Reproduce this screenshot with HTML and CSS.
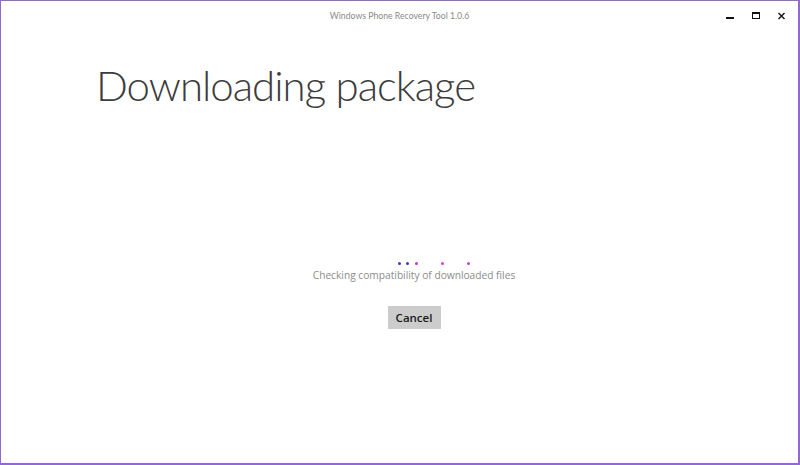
FILE: index.html
```html
<!DOCTYPE html>
<html>
<head>
<meta charset="utf-8">
<link rel="stylesheet" href="styles.css">
</head>
<body>
<div class="window">
  <div class="titlebar">
    <div class="title">Windows Phone Recovery Tool 1.0.6</div>
    <div class="controls">
      <svg class="ctl" width="12" height="12" viewBox="0 0 12 12"><rect x="2" y="7" width="8" height="2" fill="#111"/></svg>
      <svg class="ctl" width="12" height="12" viewBox="0 0 12 12"><rect x="2.5" y="2.5" width="7" height="6" fill="none" stroke="#111" stroke-width="1"/><rect x="2" y="2" width="8" height="2" fill="#111"/></svg>
      <svg class="ctl" width="12" height="12" viewBox="0 0 12 12"><path d="M2.5 3 L8.5 9 M8.5 3 L2.5 9" stroke="#111" stroke-width="1.4"/></svg>
    </div>
  </div>
  <h1 class="heading">Downloading package</h1>
  <div class="center">
    <div class="dots">
      <span class="dot d1"></span><span class="dot d2"></span><span class="dot d3"></span><span class="dot d4"></span><span class="dot d5"></span>
    </div>
    <div class="status">Checking compatibility of downloaded files</div>
    <button class="cancel">Cancel</button>
  </div>
</div>
</body>
</html>
```
FILE: styles.css
```css
html, body {
  margin: 0;
  padding: 0;
  background: #fff;
}
.window {
  box-sizing: border-box;
  width: 800px;
  height: 465px;
  border: 1px solid #9468d4;
  border-right-width: 2px;
  border-bottom-width: 2px;
  font-family: "Open Sans", "Noto Sans", sans-serif;
  display: flex;
  flex-direction: column;
}
.titlebar {
  position: relative;
  height: 30px;
  display: flex;
  align-items: center;
  justify-content: center;
}
.title {
  font-family: Lato, "Open Sans", sans-serif;
  font-size: 8.7px;
  color: #8a8a8a;
  margin-top: -1px;
}
.controls {
  position: absolute;
  right: 10px;
  top: 9px;
  display: flex;
  gap: 14px;
}
.ctl {
  display: block;
}
.heading {
  margin: 29px 0 0 95px;
  font-family: Lato, "Open Sans", sans-serif;
  font-weight: 300;
  font-size: 42px;
  letter-spacing: -1px;
  line-height: 50px;
  color: #3c3c3c;
}
.center {
  display: flex;
  flex-direction: column;
  align-items: center;
  margin-top: 152px;
  padding-left: 29px;
}
.dots {
  position: relative;
  width: 203px;
  height: 6px;
}
.dot {
  position: absolute;
  top: 0;
  width: 3px;
  height: 3px;
  border-radius: 50%;
}
.d1 { left: 85px; background: #4b34b8; }
.d2 { left: 93px; background: #4b34b8; }
.d3 { left: 102px; background: #c03ccc; }
.d4 { left: 128px; background: #cc44d8; }
.d5 { left: 154px; background: #cc44d8; }
.status {
  font-size: 10.2px;
  color: #8c8c8c;
  line-height: 14px;
}
.cancel {
  margin-top: 24px;
  width: 53px;
  height: 23px;
  border: none;
  background: #cccccc;
  font-family: "Open Sans", "Noto Sans", sans-serif;
  font-weight: 600;
  font-size: 11.5px;
  color: #1a1a1a;
  padding: 0;
}
```
